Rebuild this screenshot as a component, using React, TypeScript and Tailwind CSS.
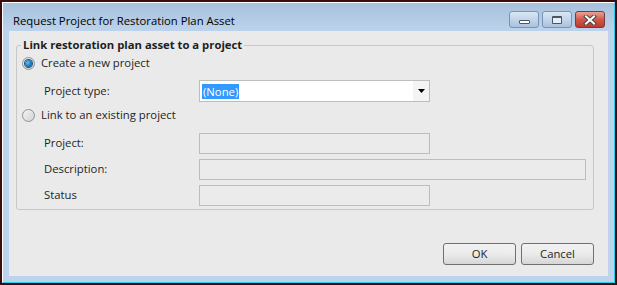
import React from "react";

const font = { fontFamily: '"Open Sans", "Noto Sans", "Liberation Sans", sans-serif' };

function Radio({ checked }: { checked?: boolean }) {
  return (
    <div className="w-[13px] h-[13px] rounded-full border border-[#8f9396] bg-gradient-to-br from-[#f4f4f4] to-[#d2d2d2] flex items-center justify-center">
      {checked && (
        <div className="w-[7px] h-[7px] rounded-full bg-[radial-gradient(circle_at_40%_40%,#5ec2f2,#0b63a8_70%,#073b66)] shadow-[0_0_0_1px_#1c4f7c]" />
      )}
    </div>
  );
}

function TitleButton({ kind }: { kind: "min" | "max" | "close" }) {
  if (kind === "close") {
    return (
      <div className="w-[30px] h-[17px] rounded-[3px] border border-[#7a3a35] bg-gradient-to-b from-[#e8a294] via-[#d0584a] to-[#c0392c] flex items-center justify-center">
        <svg width="14" height="10" viewBox="0 0 14 10">
          <path d="M3 1.5 L11 8.5 M11 1.5 L3 8.5" stroke="#4a4a4a" strokeWidth="4" strokeLinecap="square" />
          <path d="M3 1.5 L11 8.5 M11 1.5 L3 8.5" stroke="#ffffff" strokeWidth="2" strokeLinecap="square" />
        </svg>
      </div>
    );
  }
  return (
    <div className="w-[30px] h-[17px] rounded-[3px] border border-[#7a93b4] bg-gradient-to-b from-[#dbe7f4] via-[#c2d5ea] to-[#a9c1dd] flex items-center justify-center">
      {kind === "min" ? (
        <div className="w-[11px] h-[4px] mt-[5px] bg-white border border-[#4b5663] rounded-[1px]" />
      ) : (
        <div className="w-[10px] h-[8px] bg-[#e6eef7] border border-t-2 border-[#4b5663] rounded-[1px]" />
      )}
    </div>
  );
}

function Field({ label, wide }: { label: string; wide?: boolean }) {
  return (
    <div className="flex items-center h-[21px] pl-[27px]">
      <div className="w-[155px] text-[11.3px] text-[#1e1e1e]">{label}</div>
      <div
        className={`h-[21px] border border-[#bdbdbd] bg-[#ebebeb] ${wide ? "w-[387px]" : "w-[231px]"}`}
      />
    </div>
  );
}

export default function App() {
  return (
    <div className="w-[617px] h-[285px] border-2 border-[#3c0c0c] bg-[#3c0c0c]" style={font}>
      <div className="w-full h-full border-t border-l border-white border-r border-b border-r-[#2ec9ee] border-b-[#2ec9ee] bg-[#bcd3eb] flex flex-col">
        {/* title bar */}
        <div className="h-[28px] shrink-0 flex items-start bg-gradient-to-b from-[#a7c1dd] to-[#bcd3eb]">
          <div className="pl-[10px] pt-[11px] text-[11.3px] leading-[14px] text-black">
            Request Project for Restoration Plan Asset
          </div>
          <div className="ml-auto flex gap-[3px] pt-[8px] pr-[9px]">
            <TitleButton kind="min" />
            <TitleButton kind="max" />
            <TitleButton kind="close" />
          </div>
        </div>

        {/* client */}
        <div className="flex-1 mx-[6px] mb-[6px] bg-[#eaeaea] flex flex-col">
          <fieldset className="mt-[6px] ml-[7px] mr-[14px] border border-[#c8c8c8] rounded-[3px] px-0 pb-[3px]">
            <legend className="ml-[4px] px-[2px] text-[11.3px] leading-[16px] font-bold text-[#1e1e1e]">
              Link restoration plan asset to a project
            </legend>
            <div className="flex flex-col">
              <div className="flex items-center h-[20px] pl-[5px] gap-[6px]">
                <Radio checked />
                <span className="text-[11.3px] text-[#1e1e1e]">Create a new project</span>
              </div>
              <div className="flex items-center h-[22px] mt-[7px] pl-[27px]">
                <div className="w-[155px] text-[11.3px] text-[#1e1e1e]">Project type:</div>
                <div className="w-[231px] h-[22px] border border-[#bdbdbd] bg-white flex items-center">
                  <span className="ml-[2px] px-[1px] bg-[#3399ff] text-white text-[11.3px] leading-[15px]">
                    (None)
                  </span>
                  <div className="ml-auto w-[16px] h-full bg-[#f4f4f4] flex items-center justify-center">
                    <svg width="7" height="4" viewBox="0 0 7 4">
                      <path d="M0 0 H7 L3.5 4 Z" fill="#000" />
                    </svg>
                  </div>
                </div>
              </div>
              <div className="flex items-center h-[20px] mt-[3px] pl-[5px] gap-[6px]">
                <Radio />
                <span className="text-[11.3px] text-[#1e1e1e]">Link to an existing project</span>
              </div>
              <div className="flex flex-col gap-[5px] mt-[8px]">
                <Field label="Project:" />
                <Field label="Description:" wide />
                <Field label="Status" />
              </div>
            </div>
          </fieldset>

          <div className="mt-auto mb-[11px] mr-[14px] flex justify-end gap-[5px]">
            <button className="w-[73px] h-[22px] rounded-[3px] border border-[#707070] bg-gradient-to-b from-[#f2f2f2] via-[#ebebeb] to-[#d6d6d6] text-[11.3px] text-[#1e1e1e]">
              OK
            </button>
            <button className="w-[73px] h-[22px] rounded-[3px] border border-[#707070] bg-gradient-to-b from-[#f2f2f2] via-[#ebebeb] to-[#d6d6d6] text-[11.3px] text-[#1e1e1e]">
              Cancel
            </button>
          </div>
        </div>
      </div>
    </div>
  );
}
